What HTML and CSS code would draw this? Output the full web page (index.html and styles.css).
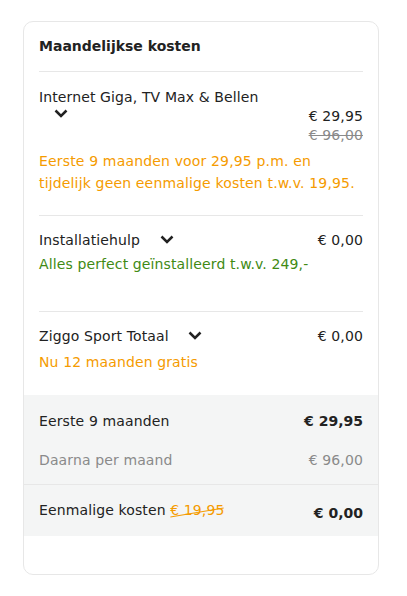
FILE: index.html
```html
<!DOCTYPE html>
<html lang="nl">
<head>
<meta charset="utf-8">
<title>Maandelijkse kosten</title>
<link rel="stylesheet" href="styles.css">
</head>
<body>
<div class="card">
  <div class="card-body">
    <h2 class="title">Maandelijkse kosten</h2>

    <div class="item item--first">
      <div class="item-row">
        <div class="item-name">Internet Giga, TV Max &amp; Bellen <span class="chev chev--wrapped"><svg width="14" height="9" viewBox="0 0 14 9"><path d="M1.5 1.5 L7 7 L12.5 1.5" fill="none" stroke="#222" stroke-width="2.5"/></svg></span></div>
        <div class="item-price item-price--stack">
          <div>€ 29,95</div>
          <div class="old">€ 96,00</div>
        </div>
      </div>
      <p class="promo promo--orange promo--first">Eerste 9 maanden voor 29,95 p.m. en tijdelijk geen eenmalige kosten t.w.v. 19,95.</p>
    </div>

    <div class="item item--second">
      <div class="item-row">
        <div class="item-name">Installatiehulp <span class="chev"><svg width="14" height="9" viewBox="0 0 14 9"><path d="M1.5 1.5 L7 7 L12.5 1.5" fill="none" stroke="#222" stroke-width="2.5"/></svg></span></div>
        <div class="item-price">€ 0,00</div>
      </div>
      <p class="promo promo--green promo--second">Alles perfect geïnstalleerd t.w.v. 249,-</p>
    </div>

    <div class="item item--last">
      <div class="item-row">
        <div class="item-name">Ziggo Sport Totaal <span class="chev"><svg width="14" height="9" viewBox="0 0 14 9"><path d="M1.5 1.5 L7 7 L12.5 1.5" fill="none" stroke="#222" stroke-width="2.5"/></svg></span></div>
        <div class="item-price">€ 0,00</div>
      </div>
      <p class="promo promo--orange promo--last">Nu 12 maanden gratis</p>
    </div>
  </div>

  <div class="summary">
    <div class="sum-block">
      <div class="sum-row">
        <span>Eerste 9 maanden</span>
        <strong class="sum-total">€ 29,95</strong>
      </div>
      <div class="sum-row sum-row--muted">
        <span>Daarna per maand</span>
        <span>€ 96,00</span>
      </div>
    </div>
    <div class="sum-block sum-block--once">
      <div class="sum-row sum-row--end">
        <span>Eenmalige kosten <span class="slash">€ 19,95</span></span>
        <strong class="sum-total sum-total--low">€ 0,00</strong>
      </div>
    </div>
  </div>
</div>
</body>
</html>
```

FILE: styles.css
```css
body {
  margin: 0;
  background: #ffffff;
  font-family: "DejaVu Sans", Verdana, sans-serif;
  font-size: 14px;
  letter-spacing: 0.12px;
  color: #222222;
}

.card {
  box-sizing: border-box;
  width: 356px;
  margin: 21px 0 0 23px;
  border: 1px solid #e7e7e7;
  border-radius: 10px;
  overflow: hidden;
  padding-bottom: 38px;
}

.card-body {
  padding: 14px 15px 0;
}

.title {
  margin: 0;
  font-size: 14px;
  font-weight: bold;
  letter-spacing: 0;
  line-height: 20px;
  padding-bottom: 15px;
  border-bottom: 1px solid #e7e7e7;
}

.item {
  border-bottom: 1px solid #e7e7e7;
  padding-top: 14px;
}

.item--first {
  padding-top: 15px;
  padding-bottom: 21px;
}

.item--second {
  padding-bottom: 36px;
}

.item--last {
  border-bottom: none;
  padding-bottom: 22px;
}

.item-row {
  display: flex;
  align-items: flex-start;
  gap: 24px;
}

.item-name {
  flex: 1;
  line-height: 20px;
}

.chev {
  display: inline-block;
  margin-left: 15px;
  width: 14px;
  height: 9px;
  vertical-align: 1px;
}

.chev svg {
  display: block;
}

.chev--wrapped {
  vertical-align: 4px;
}

.item-price {
  line-height: 20px;
  white-space: nowrap;
  text-align: right;
}

.item-price--stack {
  margin-top: 20px;
  line-height: 19px;
}

.old {
  color: #8a8a8a;
  text-decoration: line-through;
}

.promo {
  margin: 0;
  line-height: 22px;
}

.promo--orange {
  color: #f59b00;
}

.promo--green {
  color: #418a14;
}

.promo--first {
  margin-top: 5px;
  letter-spacing: 0.16px;
}

.promo--second {
  margin-top: 3px;
}

.promo--last {
  margin-top: 5px;
}

.summary {
  background: #f4f5f5;
}

.sum-block {
  padding: 16px 15px 14px;
  border-bottom: 1px solid #e7e7e7;
}

.sum-block--once {
  padding: 15px 15px 16px;
  border-bottom: none;
}

.sum-row {
  display: flex;
  justify-content: space-between;
  align-items: center;
  line-height: 20px;
}

.sum-row--muted {
  margin-top: 19px;
  color: #8a8a8a;
}

.sum-row--end {
  align-items: flex-end;
}

.sum-total {
  font-weight: bold;
  letter-spacing: 0;
}

.sum-total--low {
  line-height: 14px;
}

.slash {
  position: relative;
  color: #f59b00;
}

.slash::after {
  content: "";
  position: absolute;
  left: 0;
  right: 0;
  top: 62%;
  height: 1px;
  background: #f59b00;
  transform: rotate(-9.6deg);
}
```
